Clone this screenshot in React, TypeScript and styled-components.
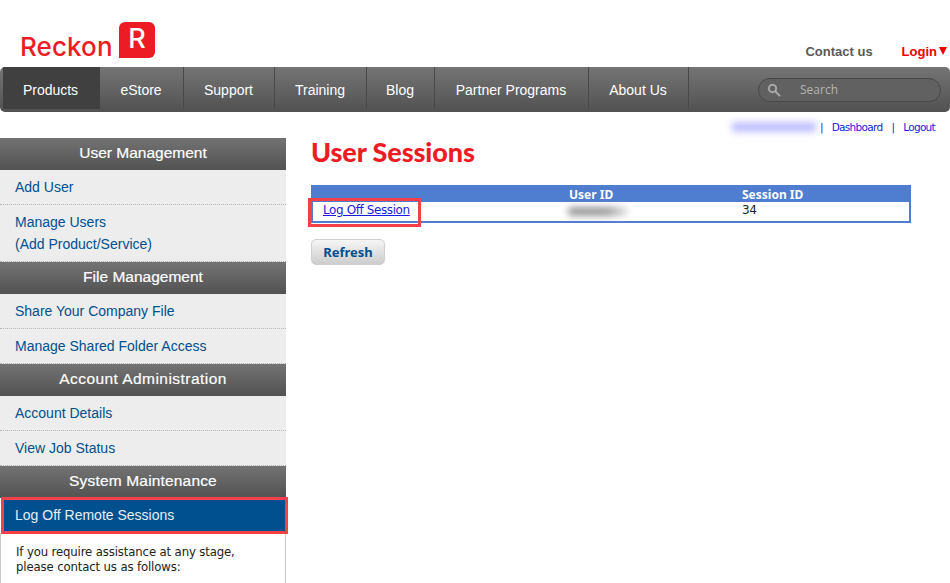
import React from "react";
import styled, { createGlobalStyle } from "styled-components";

const GlobalStyle = createGlobalStyle`
  html, body {
    margin: 0;
    padding: 0;
    background: #fff;
    overflow: hidden;
  }
  *, *::after { box-sizing: border-box; }
`;

const Page = styled.div`
  width: 950px;
  height: 583px;
  overflow: hidden;
  font-family: "Liberation Sans", Arial, sans-serif;
`;

const Header = styled.header`
  height: 67px;
  display: flex;
  justify-content: space-between;
  padding: 22px 3px 0 20px;
`;

const Logo = styled.div`
  display: flex;
  align-items: flex-end;
  gap: 7px;
  height: 36px;
`;

const LogoText = styled.span`
  width: 92px;
  font-family: "Inter", sans-serif;
  font-size: 26px;
  font-weight: 500;
  line-height: 23px;
  color: #ed1c24;
  letter-spacing: 0.1px;
  white-space: nowrap;
`;

const LogoMark = styled.span`
  width: 36px;
  height: 36px;
  border-radius: 6px 6px 6px 0;
  background: #ed1c24;
  color: #fff;
  font-family: "Inter", sans-serif;
  font-size: 27px;
  font-weight: 500;
  line-height: 34px;
  text-align: center;
`;

const HeaderLinks = styled.div`
  display: flex;
  gap: 29px;
  padding-top: 22px;
  font-size: 13px;
  line-height: 16px;
  font-weight: bold;
`;

const ContactLink = styled.a`
  color: #595959;
`;

const LoginLink = styled.a`
  display: flex;
  gap: 2px;
  color: #f00000;
`;

const LoginCaret = styled.span`
  width: 0;
  height: 0;
  margin-top: 3px;
  border-left: 4px solid transparent;
  border-right: 4px solid transparent;
  border-top: 8px solid #f00000;
`;

const Nav = styled.nav`
  height: 45px;
  margin: 0;
  padding: 0 9px 3px 3px;
  display: flex;
  justify-content: space-between;
  border-radius: 5px;
  background: linear-gradient(#757575, #515151);
`;

const NavList = styled.div`
  display: flex;
`;

const NavItem = styled.a<{ $active?: boolean; $width: number }>`
  width: ${(p) => p.$width}px;
  display: flex;
  align-items: center;
  justify-content: center;
  padding: 3px 1px 0 0;
  font-size: 14px;
  color: #fff;
  background: ${(p) => (p.$active ? "#404040" : "transparent")};
  border-right: 1px solid ${(p) => (p.$active ? "transparent" : "#484848")};
`;

const SearchBox = styled.div`
  align-self: center;
  width: 183px;
  height: 24px;
  margin-top: 3px;
  display: flex;
  align-items: center;
  gap: 19px;
  padding-left: 8px;
  border: 1px solid #484848;
  border-radius: 12px;
  background: #616161;
  color: #b4b4b4;
  font-family: "Open Sans", sans-serif;
  font-size: 12px;
`;

const Content = styled.div`
  display: flex;
`;

const Sidebar = styled.aside`
  width: 286px;
  flex: none;
  margin-top: 26px;
`;

const SideHeading = styled.h3<{ $tracking?: number }>`
  margin: 0;
  height: 32px;
  background: linear-gradient(#737373, #525252);
  color: #fff;
  font-size: 15.5px;
  font-weight: normal;
  line-height: 30px;
  letter-spacing: ${(p) => p.$tracking ?? 0}px;
  text-align: center;
  -webkit-text-stroke: 0.2px #fff;
`;

const SideItem = styled.a<{ $tall?: boolean }>`
  display: block;
  height: ${(p) => (p.$tall ? 57 : 35)}px;
  padding: 6px 15px 0;
  background: #ededed;
  border-bottom: 1px dotted #b5b5b5;
  color: #00508f;
  font-size: 14px;
  line-height: 22px;
`;

const ActiveItem = styled.a`
  display: block;
  position: relative;
  height: 35px;
  padding: 7px 15px 0 13px;
  background: #00508f;
  color: #e6eef5;
  font-size: 14px;
  line-height: 20px;
  outline: 3px solid #f44048;
  outline-offset: -2px;
  margin: 0 -1px 0 2px;
`;

const Assist = styled.div`
  padding: 11px 15px 0;
  height: 60px;
  border-left: 1px solid #c8c8c8;
  border-right: 1px solid #c8c8c8;
  color: #222;
  font-family: "DejaVu Sans", sans-serif;
  font-stretch: condensed;
  font-size: 13px;
  line-height: 15px;
  letter-spacing: -0.13px;
`;

const Main = styled.main`
  flex: 1;
  padding: 0 39px 0 25px;
`;

const TopLinks = styled.div`
  height: 26px;
  display: flex;
  justify-content: flex-end;
  align-items: flex-end;
  padding-bottom: 3px;
  color: #1a1ae0;
  font-family: "DejaVu Sans", sans-serif;
  font-size: 10.5px;
  letter-spacing: -0.7px;
  margin-right: -24px;
  gap: 9px;
  line-height: 15px;
`;

const BlurName = styled.span`
  width: 84px;
  height: 10px;
  margin: 0 -5px 3px 0;
  background: #bfbfff;
  filter: blur(3.5px);
`;

const TopLink = styled.a`
  color: #1a1ae0;
`;

const Title = styled.h1`
  margin: 0;
  height: 33px;
  color: #ed1c24;
  font-family: "Lato", sans-serif;
  font-size: 27px;
  font-weight: 900;
  line-height: 28px;
  letter-spacing: -0.1px;
`;

const Table = styled.table`
  width: 600px;
  margin-top: 14px;
  border: 2px solid #4f7dd0;
  border-top: 0;
  border-collapse: collapse;
  table-layout: fixed;
  font-family: "DejaVu Sans", sans-serif;
  font-size: 12px;
  letter-spacing: -0.4px;
`;

const HeadCell = styled.th<{ $width?: number }>`
  ${(p) => (p.$width ? `width: ${p.$width}px;` : "")}
  height: 17px;
  padding: 2px 0 0;
  background: #4f7dd0;
  color: #fff;
  text-align: left;
  font-family: "Noto Sans", sans-serif;
  font-size: 12px;
  letter-spacing: 0;
  line-height: 15px;
`;

const Cell = styled.td`
  height: 20px;
  padding: 0 0 3px;
  color: #222;
`;

const LogOffCell = styled(Cell)`
  padding-left: 10px;
`;

const LogOffLink = styled.a`
  position: relative;
  color: #1a1ae0;
  text-decoration: underline;
  &::after {
    content: "";
    position: absolute;
    left: -15px;
    top: -5px;
    width: 113px;
    height: 29px;
    border: 3px solid #f44048;
  }
`;

const BlurUser = styled.span`
  display: block;
  width: 60px;
  height: 9px;
  margin: 3px 0 0 -1px;
  background: linear-gradient(90deg, #999 65%, #e8e8e8);
  border-radius: 4px;
  filter: blur(3.5px);
`;

const RefreshButton = styled.button`
  display: block;
  width: 74px;
  height: 26px;
  margin-top: 16px;
  padding: 0;
  border: 1px solid #cfcfcf;
  border-radius: 5px;
  background: linear-gradient(#f6f6f6, #cdcdcd);
  color: #00508f;
  font-family: "Noto Sans", sans-serif;
  font-size: 13px;
  font-weight: bold;
`;

function SearchIcon() {
  return (
    <svg width="14" height="14" viewBox="0 0 14 14" fill="none" stroke="#a8a8a8" strokeWidth="2">
      <circle cx="5.5" cy="5.5" r="3.7" />
      <path d="M8.5 8.5L12.5 12.5" strokeLinecap="round" />
    </svg>
  );
}

const navItems = [
  { label: "Products", width: 97, active: true },
  { label: "eStore", width: 84 },
  { label: "Support", width: 91 },
  { label: "Training", width: 92 },
  { label: "Blog", width: 68 },
  { label: "Partner Programs", width: 154 },
  { label: "About Us", width: 100 },
];

export default function App() {
  return (
    <Page>
      <GlobalStyle />
      <Header>
        <Logo>
          <LogoText>Reckon</LogoText>
          <LogoMark>R</LogoMark>
        </Logo>
        <HeaderLinks>
          <ContactLink>Contact us</ContactLink>
          <LoginLink>
            Login
            <LoginCaret />
          </LoginLink>
        </HeaderLinks>
      </Header>
      <Nav>
        <NavList>
          {navItems.map((item) => (
            <NavItem key={item.label} $active={item.active} $width={item.width}>
              {item.label}
            </NavItem>
          ))}
        </NavList>
        <SearchBox>
          <SearchIcon />
          Search
        </SearchBox>
      </Nav>
      <Content>
        <Sidebar>
          <SideHeading>User Management</SideHeading>
          <SideItem>Add User</SideItem>
          <SideItem $tall>
            Manage Users
            <br />
            (Add Product/Service)
          </SideItem>
          <SideHeading>File Management</SideHeading>
          <SideItem>Share Your Company File</SideItem>
          <SideItem>Manage Shared Folder Access</SideItem>
          <SideHeading $tracking={0.45}>Account Administration</SideHeading>
          <SideItem>Account Details</SideItem>
          <SideItem>View Job Status</SideItem>
          <SideHeading $tracking={0.17}>System Maintenance</SideHeading>
          <ActiveItem>Log Off Remote Sessions</ActiveItem>
          <Assist>
            If you require assistance at any stage,
            <br />
            please contact us as follows:
          </Assist>
        </Sidebar>
        <Main>
          <TopLinks>
            <BlurName />
            <span>|</span>
            <TopLink>Dashboard</TopLink>
            <span>|</span>
            <TopLink>Logout</TopLink>
          </TopLinks>
          <Title>User Sessions</Title>
          <Table>
            <thead>
              <tr>
                <HeadCell $width={257} />
                <HeadCell $width={173}>User ID</HeadCell>
                <HeadCell>Session ID</HeadCell>
              </tr>
            </thead>
            <tbody>
              <tr>
                <LogOffCell>
                  <LogOffLink>Log Off Session</LogOffLink>
                </LogOffCell>
                <Cell>
                  <BlurUser />
                </Cell>
                <Cell>34</Cell>
              </tr>
            </tbody>
          </Table>
          <RefreshButton>Refresh</RefreshButton>
        </Main>
      </Content>
    </Page>
  );
}
